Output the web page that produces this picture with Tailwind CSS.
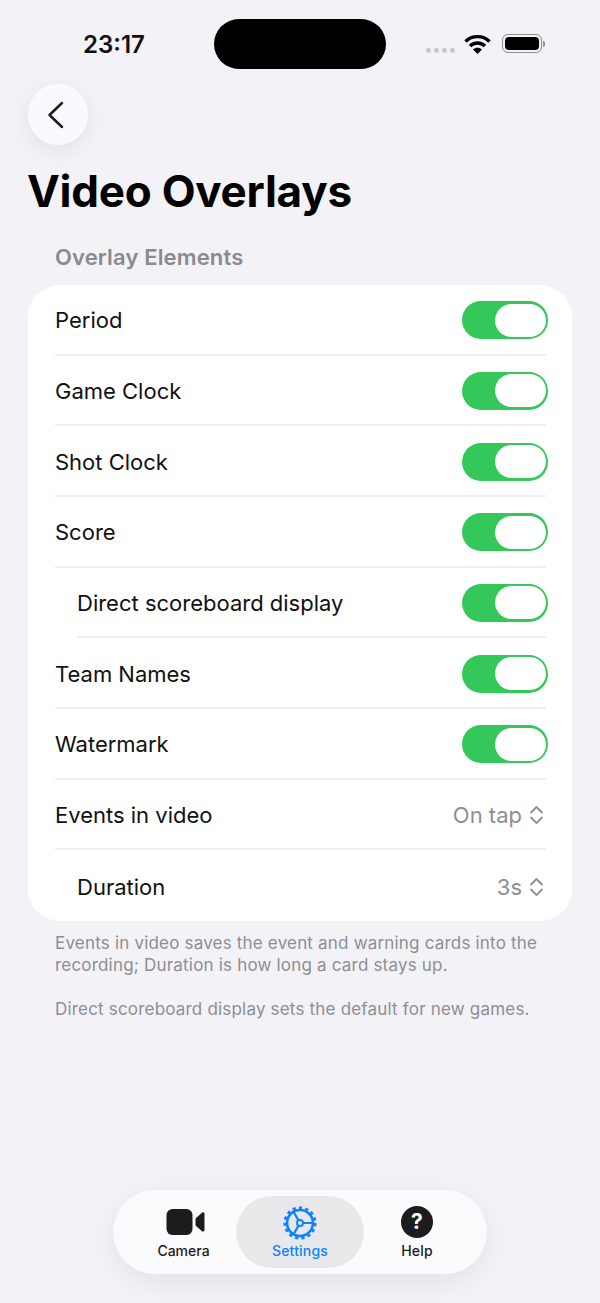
<!DOCTYPE html>
<html>
<head>
<meta charset="utf-8">
<script src="https://cdn.jsdelivr.net/npm/@tailwindcss/browser@4"></script>
</head>
<body class="bg-[#f2f2f7] font-['Inter',sans-serif] text-black">
<div class="relative w-[600px] h-[1303px] overflow-hidden">
  <!-- status bar -->
  <div class="flex h-[84px] items-start pt-[19px]">
    <div class="ml-[83px] w-[131px] pt-[10px] text-[24px] leading-[32px] font-semibold text-[#111]">23:17</div>
    <div class="w-[172px] h-[50px] rounded-[25px] bg-black"></div>
    <div class="ml-[40px] flex gap-[3px] mt-[29px]">
      <span class="w-[5px] h-[5px] rounded-full bg-[#c8c8cc]"></span>
      <span class="w-[5px] h-[5px] rounded-full bg-[#c8c8cc]"></span>
      <span class="w-[5px] h-[5px] rounded-full bg-[#c8c8cc]"></span>
      <span class="w-[5px] h-[5px] rounded-full bg-[#c8c8cc]"></span>
    </div>
    <svg class="ml-[9px] mt-[15px]" width="27" height="20" viewBox="0 0 27 20" fill="none" stroke="#000" stroke-width="3.4">
      <path d="M1.5 7.5C8 1 19 1 25.5 7.5"/>
      <path d="M6 12C10 8 17 8 21 12"/>
      <path d="M13.5 20L9 15.5C11.5 13.2 15.5 13.2 18 15.5Z" fill="#000" stroke="none"/>
    </svg>
    <div class="ml-[11px] mt-[15px] flex items-center">
      <div class="w-[40px] h-[19px] rounded-[6px] border-[1.5px] border-[#8e8e93] p-[2px]"><div class="w-full h-full rounded-[4px] bg-black"></div></div>
      <div class="ml-[1px] w-[2px] h-[6px] rounded-r-full bg-[#8e8e93]"></div>
    </div>
  </div>

  <!-- back -->
  <div class="ml-[28px] w-[60px] h-[61px] rounded-full bg-[#fafafe] shadow-[0_6px_24px_rgba(0,0,0,0.07)] flex items-center justify-center">
    <svg class="mr-[5px]" width="17" height="28" viewBox="0 0 17 28" fill="none" stroke="#1c1c1e" stroke-width="2.5" stroke-linecap="round" stroke-linejoin="round"><path d="M15 2L2.5 14L15 26"/></svg>
  </div>

  <h1 class="ml-[27px] mt-[18px] text-[44px] leading-[56px] font-bold tracking-[-0.25px]">Video Overlays</h1>
  <div class="ml-[55px] mt-[22px] text-[22px] leading-[32px] font-semibold tracking-[0.15px] text-[#8a8a8e]">Overlay Elements</div>

  <!-- card -->
  <div class="mx-[28px] mt-[12px] w-[544px] h-[636px] rounded-[32px] bg-white grid grid-rows-9 text-[22px] text-[#111]">
    <div class="ml-[27px] mr-[26px] pt-[1px] flex items-center justify-between border-b-2 border-[#efeff1]"><span class="mt-[2px]">Period</span>
      <div class="-mr-[2px] mt-[1px] w-[86px] h-[38px] rounded-full bg-[#34c759] flex justify-end items-center pr-[2px]"><div class="w-[51px] h-[33px] rounded-full bg-white"></div></div></div>
    <div class="ml-[27px] mr-[26px] pt-[1px] flex items-center justify-between border-b-2 border-[#efeff1]"><span class="mt-[2px]">Game Clock</span>
      <div class="-mr-[2px] mt-[1px] w-[86px] h-[38px] rounded-full bg-[#34c759] flex justify-end items-center pr-[2px]"><div class="w-[51px] h-[33px] rounded-full bg-white"></div></div></div>
    <div class="ml-[27px] mr-[26px] pt-[1px] flex items-center justify-between border-b-2 border-[#efeff1]"><span class="mt-[2px]">Shot Clock</span>
      <div class="-mr-[2px] mt-[1px] w-[86px] h-[38px] rounded-full bg-[#34c759] flex justify-end items-center pr-[2px]"><div class="w-[51px] h-[33px] rounded-full bg-white"></div></div></div>
    <div class="ml-[27px] mr-[26px] pt-[1px] flex items-center justify-between border-b-2 border-[#efeff1]"><span class="mt-[2px]">Score</span>
      <div class="-mr-[2px] mt-[1px] w-[86px] h-[38px] rounded-full bg-[#34c759] flex justify-end items-center pr-[2px]"><div class="w-[51px] h-[33px] rounded-full bg-white"></div></div></div>
    <div class="ml-[49px] mr-[26px] pt-[1px] flex items-center justify-between border-b-2 border-[#efeff1]"><span class="mt-[2px]">Direct scoreboard display</span>
      <div class="-mr-[2px] mt-[1px] w-[86px] h-[38px] rounded-full bg-[#34c759] flex justify-end items-center pr-[2px]"><div class="w-[51px] h-[33px] rounded-full bg-white"></div></div></div>
    <div class="ml-[27px] mr-[26px] pt-[1px] flex items-center justify-between border-b-2 border-[#efeff1]"><span class="mt-[2px]">Team Names</span>
      <div class="-mr-[2px] mt-[1px] w-[86px] h-[38px] rounded-full bg-[#34c759] flex justify-end items-center pr-[2px]"><div class="w-[51px] h-[33px] rounded-full bg-white"></div></div></div>
    <div class="ml-[27px] mr-[26px] pt-[1px] flex items-center justify-between border-b-2 border-[#efeff1]"><span class="mt-[2px]">Watermark</span>
      <div class="-mr-[2px] mt-[1px] w-[86px] h-[38px] rounded-full bg-[#34c759] flex justify-end items-center pr-[2px]"><div class="w-[51px] h-[33px] rounded-full bg-white"></div></div></div>
    <div class="ml-[27px] mr-[26px] pt-[1px] flex items-center justify-between border-b-2 border-[#efeff1]"><span class="mt-[2px]">Events in video</span>
      <div class="flex items-center gap-[7px] mr-[2px] mt-[2px] text-[#8e8e93]"><span>On tap</span>
        <svg width="15" height="20" viewBox="0 0 15 20" fill="none" stroke="#8e8e93" stroke-width="1.8" stroke-linecap="round" stroke-linejoin="round"><path d="M2 7.5L7.5 2L13 7.5"/><path d="M2 12.5L7.5 18L13 12.5"/></svg></div></div>
    <div class="ml-[49px] mr-[26px] pt-[1px] flex items-center justify-between"><span class="mt-[2px]">Duration</span>
      <div class="flex items-center gap-[7px] mr-[2px] mt-[2px] text-[#8e8e93]"><span>3s</span>
        <svg width="15" height="20" viewBox="0 0 15 20" fill="none" stroke="#8e8e93" stroke-width="1.8" stroke-linecap="round" stroke-linejoin="round"><path d="M2 7.5L7.5 2L13 7.5"/><path d="M2 12.5L7.5 18L13 12.5"/></svg></div></div>
  </div>

  <div class="ml-[55px] mr-[40px] mt-[11px] text-[17px] leading-[22px] tracking-[0.19px] text-[#8e8e93]">
    <p>Events in video saves the event and warning cards into the recording; Duration is how long a card stays up.</p>
    <p class="mt-[22px]">Direct scoreboard display sets the default for new games.</p>
  </div>

  <!-- tab bar -->
  <div class="absolute left-[113px] top-[1190px] w-[374px] h-[84px] rounded-[42px] bg-[#fbfbfe] shadow-[0_8px_30px_rgba(0,0,0,0.07)] flex items-center pl-[6px] text-[14px] font-medium tracking-[0.2px]">
    <div class="w-[117px] mt-[2px] pl-[13px] flex flex-col items-center text-[#1c1c1e]">
      <svg class="mt-[2px] ml-[3px]" width="39" height="28" viewBox="0 0 39 28" fill="#1c1c1e"><rect x="0.5" y="1" width="26" height="26" rx="6"/><path d="M29.5 10.5L36 4.7C37 3.9 38.5 4.6 38.5 5.9V22.1C38.5 23.4 37 24.1 36 23.3L29.5 17.5Z"/></svg>
      <span class="mt-[6px] leading-[18px] tracking-[0px] -ml-[1px]">Camera</span>
    </div>
    <div class="w-[128px] h-[72px] rounded-[36px] bg-[#e8e8eb] flex flex-col items-center justify-center text-[#0a84ff]">
      <svg width="36" height="36" viewBox="0 0 36 36" fill="none" stroke="#0a84ff">
        <circle cx="18" cy="18" r="13" stroke-width="2.6"/>
        <circle cx="18" cy="18" r="15.2" stroke-width="2.8" stroke-dasharray="3.2 3.17"/>
        <circle cx="18" cy="18" r="3" stroke-width="2"/>
        <path d="M21 18H31M16.5 15.4L11.5 6.8M16.5 20.6L11.5 29.2" stroke-width="2.2"/>
      </svg>
      <span class="mt-[1px] leading-[18px]">Settings</span>
    </div>
    <div class="w-[106px] mt-[2px] flex flex-col items-center text-[#1c1c1e]">
      <div class="w-[32px] h-[32px] rounded-full bg-[#1c1c1e] text-white text-[21px] leading-[32px] font-bold text-center">?</div>
      <span class="mt-[4px] leading-[18px]">Help</span>
    </div>
  </div>
</div>
</body>
</html>
